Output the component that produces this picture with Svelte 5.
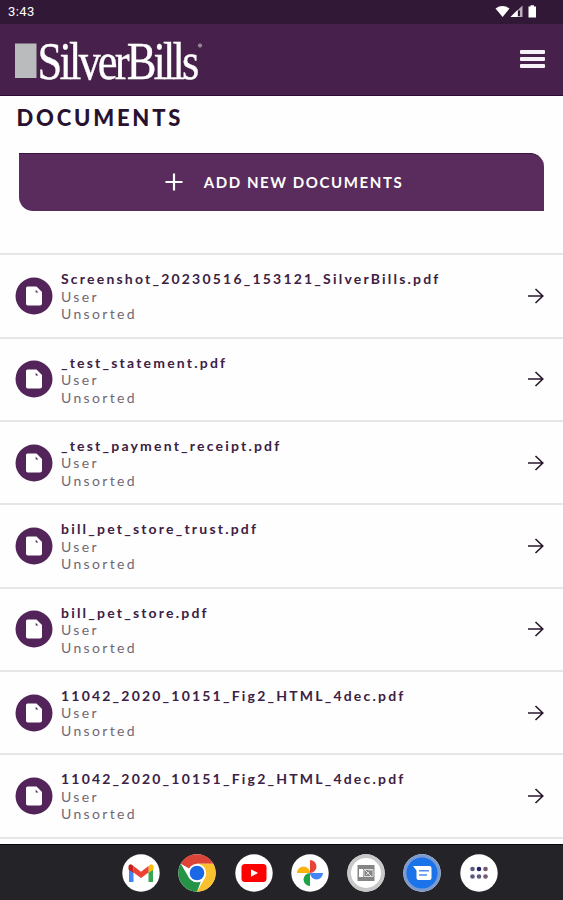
<script lang="ts">
  type Doc = { name: string; owner: string; folder: string };

  const names = [
    "Screenshot_20230516_153121_SilverBills.pdf",
    "_test_statement.pdf",
    "_test_payment_receipt.pdf",
    "bill_pet_store_trust.pdf",
    "bill_pet_store.pdf",
    "11042_2020_10151_Fig2_HTML_4dec.pdf",
    "11042_2020_10151_Fig2_HTML_4dec.pdf",
  ];

  let documents: Doc[] = $state(
    names.map((name) => ({ name, owner: "User", folder: "Unsorted" }))
  );

  const apps = ["gmail", "chrome", "youtube", "photos", "news", "messages", "drawer"];
</script>

<div class="screen">
  <div class="status-bar">
    <span class="clock">3:43</span>
    <svg class="status-icons" width="44" height="14" viewBox="0 0 44 14">
      <path d="M0.5 3.5Q7.5 -1.3 14.5 3.5L7.6 12Z" fill="#fff" />
      <path d="M27.5 0.5V12H15.5Z" fill="#b9acbc" />
      <path d="M22.5 5L15.5 12H22.5Z" fill="#fff" />
      <path d="M24 5.5V11" stroke="#321837" stroke-width="2" />
      <path d="M33.5 1.5h2V0.2h3.5v1.3h2V12.5H33.5Z" fill="#fff" />
    </svg>
  </div>

  <header class="app-bar">
    <svg class="logo" width="196" height="70" viewBox="0 0 196 70" role="img" aria-label="SilverBills">
      <rect x="3" y="18.5" width="21.5" height="34.5" fill="#b9bbbc" />
      <text class="logo-text" transform="translate(25.5 54) scale(0.84 1)">SilverBills</text>
      <circle cx="188" cy="20.5" r="1.6" fill="#8d7490" stroke="#b7a7b9" stroke-width="0.8" />
    </svg>
    <button class="menu" aria-label="Menu">
      <span></span>
      <span></span>
      <span></span>
    </button>
  </header>

  <main>
    <h1>DOCUMENTS</h1>
    <button class="add">
      <svg width="18" height="18" viewBox="0 0 18 18">
        <path d="M9 0.5V17.5M0.5 9H17.5" stroke="#fff" stroke-width="2.2" />
      </svg>
      <span>ADD NEW DOCUMENTS</span>
    </button>

    <ul class="documents">
      {#each documents as doc}
        <li>
          <svg class="file-icon" width="38" height="38" viewBox="0 0 38 38">
            <circle cx="19" cy="19" r="18.5" fill="#532459" />
            <path d="M12.5 9.5H21.5L27 15V26.5Q27 28.5 25 28.5H12.8Q11 28.5 11 26.5V11Q11 9.5 12.5 9.5Z" fill="#fff" />
            <path d="M20.7 12.8L23.4 15.5H20.7Z" fill="#532459" />
          </svg>
          <div class="details">
            <span class="name">{doc.name}</span>
            <span>{doc.owner}</span>
            <span>{doc.folder}</span>
          </div>
          <svg class="arrow" width="18" height="18" viewBox="0 0 18 18">
            <path d="M1 9H16M8.5 2L15.8 9L8.5 16" fill="none" stroke="#28172d" stroke-width="1.6" />
          </svg>
        </li>
      {/each}
    </ul>
  </main>

  <nav class="dock">
    {#each apps as app}
      <svg width="38" height="38" viewBox="0 0 38 38" role="img" aria-label={app}>
        <circle cx="19" cy="19" r="18.7" fill="#fff" />
        {#if app === "gmail"}
          <path d="M7 13V28H11.5V17Z" fill="#4285f4" />
          <path d="M31 13V28H26.5V17Z" fill="#34a853" />
          <path d="M26.5 12Q30 8.5 31.5 12V15.5L26.5 19Z" fill="#fbbc04" />
          <path d="M11.5 12L19 17.8L26.5 12V18.5L19 24L11.5 18.5Z" fill="#ea4335" />
          <path d="M11.5 12Q8 8.5 6.5 12V15.5L11.5 19Z" fill="#c5221f" />
        {:else if app === "chrome"}
          <path d="M19 19L2.8 9.7A18.7 18.7 0 0 1 35.2 9.7H19Z" fill="#db4437" />
          <path d="M19 9.7H35.2A18.7 18.7 0 0 1 19 37.7L27 23.7Z" fill="#fbc02d" />
          <path d="M2.8 9.7L11 23.7Q15 29 22.8 27.6L19 37.7A18.7 18.7 0 0 1 2.8 9.7Z" fill="#269447" />
          <circle cx="19" cy="19" r="9.2" fill="#fff" />
          <circle cx="19" cy="19" r="7.3" fill="#1a68e5" />
        {:else if app === "youtube"}
          <rect x="6.5" y="10" width="25" height="18" rx="3.5" fill="#f00" />
          <path d="M16 15.2L23 19L16 22.8Z" fill="#fff" />
        {:else if app === "photos"}
          <path d="M19 19V6A6.3 6.3 0 0 1 19 19Z" fill="#ea4335" />
          <path d="M19 19H32A6.3 6.3 0 0 1 19 19Z" fill="#4285f4" />
          <path d="M19 19V32A6.3 6.3 0 0 1 19 19Z" fill="#1ea446" />
          <path d="M19 19H6A6.3 6.3 0 0 1 19 19Z" fill="#fbb30b" />
        {:else if app === "news"}
          <circle cx="19" cy="19" r="18.7" fill="#c8c8c8" />
          <circle cx="19" cy="19" r="15" fill="#fff" />
          <rect x="10.5" y="11" width="17" height="16" fill="#858585" />
          <path d="M12 15H16V23H12Z" fill="#fff" />
          <path d="M17 15.5H26V22.5H17ZM18 16L24 22M21 16H25M19 21L22 18" fill="none" stroke="#ddd" stroke-width="1" />
        {:else if app === "messages"}
          <circle cx="19" cy="19" r="18.7" fill="#7b9bd0" />
          <circle cx="19" cy="19" r="15.6" fill="#1a73e8" />
          <path d="M10 12H26.5Q28.5 12 28.5 14V24Q28.5 26 26.5 26H15.5Q13.5 26 13.5 24V16.5Z" fill="#fff" />
          <path d="M16 16.8H26M16 21H24" stroke="#4c8eea" stroke-width="1.5" />
        {:else}
          {#each [15, 22.5] as cy, row}
            {#each [12.5, 19, 25.5] as cx, col}
              <circle {cx} {cy} r="2.3" fill={row === 0 && col === 1 ? "#24226f" : col === 2 ? "#755970" : "#5b5b82"} />
            {/each}
          {/each}
        {/if}
      </svg>
    {/each}
  </nav>
</div>

<style>
  :global(body) {
    margin: 0;
    background: #fff;
  }

  .screen {
    width: 563px;
    height: 900px;
    display: flex;
    flex-direction: column;
    overflow: hidden;
    background: #fefefe;
    font-family: Lato, sans-serif;
  }

  .status-bar {
    flex: none;
    box-sizing: border-box;
    height: 24px;
    padding: 0 24px 0 8px;
    display: flex;
    align-items: center;
    justify-content: space-between;
    background: #321837;
    color: #fff;
  }

  .clock {
    font: 400 13px/24px Roboto, sans-serif;
    letter-spacing: 0.4px;
  }

  .app-bar {
    flex: none;
    box-sizing: border-box;
    height: 72px;
    padding: 0 18px 0 12px;
    display: flex;
    align-items: center;
    justify-content: space-between;
    background: #47204b;
    border-bottom: 1px solid #2d0c33;
  }

  .logo {
    overflow: visible;
  }

  .logo-text {
    font-family: "Liberation Serif", serif;
    font-size: 53px;
    letter-spacing: -3.4px;
    fill: #fff;
    stroke: #fff;
    stroke-width: 0.4px;
  }

  button {
    border: 0;
    padding: 0;
    font-family: inherit;
  }

  .menu {
    width: 25px;
    margin-bottom: 1px;
    display: flex;
    flex-direction: column;
    gap: 3px;
    background: none;
  }

  .menu span {
    height: 4px;
    border-radius: 1px;
    background: #f6f1f6;
  }

  main {
    flex: 1;
    min-height: 0;
    overflow: hidden;
    display: flex;
    flex-direction: column;
  }

  h1 {
    margin: 8px 0 0 16.5px;
    font-size: 22px;
    line-height: 28px;
    font-weight: 900;
    letter-spacing: 2.8px;
    color: #28122f;
  }

  .add {
    flex: none;
    box-sizing: border-box;
    height: 58px;
    margin: 21px 19px 42.4px;
    padding: 0 0 1px 5px;
    display: flex;
    align-items: center;
    justify-content: center;
    gap: 21px;
    border-top: 1px solid #3c1041;
    border-radius: 0 14px 0 14px;
    background: #592c5d;
    color: #fff;
    font-size: 15px;
    font-weight: 700;
    letter-spacing: 1.6px;
  }

  .documents {
    list-style: none;
    margin: 0;
    padding: 0;
  }

  li {
    box-sizing: border-box;
    height: 83.35px;
    padding: 0 18px 0 15px;
    display: flex;
    align-items: center;
    border-top: 2px solid #e6e6e6;
  }

  li:last-child {
    height: 85.35px;
    border-bottom: 2px solid #e6e6e6;
  }

  .details {
    flex: 1;
    margin-left: 8px;
    padding-top: 1px;
    display: flex;
    flex-direction: column;
    font-size: 14px;
    line-height: 17.6px;
    letter-spacing: 2.35px;
    color: #706873;
  }

  .name {
    font-weight: 700;
    letter-spacing: 2.2px;
    color: #3c2144;
  }

  .dock {
    flex: none;
    box-sizing: border-box;
    height: 56px;
    padding-left: 122px;
    display: flex;
    align-items: center;
    gap: 18.3px;
    background: #242428;
    border-top: 1px solid #08080a;
  }
</style>
